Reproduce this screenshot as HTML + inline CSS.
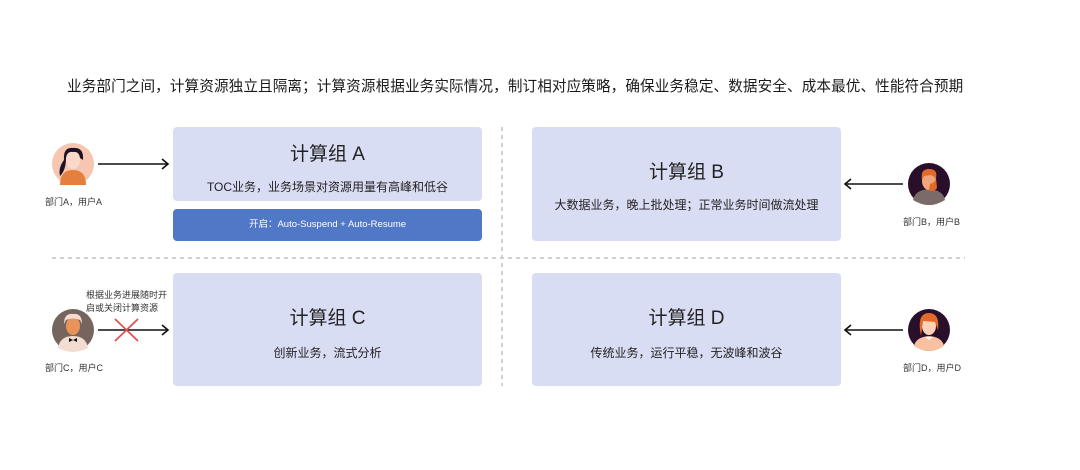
<!DOCTYPE html>
<html><head><meta charset="utf-8"><style>
body{margin:0;width:1080px;height:470px;background:#fff;position:relative;overflow:hidden;font-family:"Liberation Sans","Noto Sans CJK SC",sans-serif;color:#222}
.a{position:absolute}
.box{position:absolute;background:#d9ddf4;border-radius:4px;text-align:center}
.t{font-size:19px;color:#222}
.s{font-size:12px;color:#222}
.lbl{position:absolute;font-size:9px;color:#333;white-space:nowrap}
</style></head><body>
<div class="a" style="left:67px;top:75px;font-size:14.6px;letter-spacing:0.1px;white-space:nowrap;color:#1a1a1a">业务部门之间，计算资源独立且隔离；计算资源根据业务实际情况，制订相对应策略，确保业务稳定、数据安全、成本最优、性能符合预期</div>

<div class="box" style="left:173px;top:127px;width:309px;height:74px"><div class="t" style="margin-top:12px">计算组 A</div><div class="s" style="margin-top:12px">TOC业务，业务场景对资源用量有高峰和低谷</div></div>
<div class="a" style="left:173px;top:209px;width:309px;height:32px;background:#5078c7;border-radius:4px;color:#fff;font-size:9.5px;text-align:center;line-height:32px">开启：Auto-Suspend + Auto-Resume</div>
<div class="box" style="left:532px;top:127px;width:309px;height:114px"><div class="t" style="margin-top:30px">计算组 B</div><div class="s" style="margin-top:12px">大数据业务，晚上批处理；正常业务时间做流处理</div></div>
<div class="box" style="left:173px;top:273px;width:309px;height:113px"><div class="t" style="margin-top:30px">计算组 C</div><div class="s" style="margin-top:14px">创新业务，流式分析</div></div>
<div class="box" style="left:532px;top:273px;width:309px;height:113px"><div class="t" style="margin-top:30px">计算组 D</div><div class="s" style="margin-top:14px">传统业务，运行平稳，无波峰和波谷</div></div>

<svg class="a" style="left:0;top:0" width="1080" height="470">
<line x1="52" y1="258" x2="965" y2="258" stroke="#c4c4c4" stroke-width="1.5" stroke-dasharray="4,4"/>
<line x1="502" y1="127" x2="502" y2="386" stroke="#c4c4c4" stroke-width="1.5" stroke-dasharray="4,4"/>
<g stroke="#111" stroke-width="1.6" fill="none">
<line x1="98" y1="164" x2="168" y2="164"/><path d="M162 159 L168 164 L162 169"/>
<line x1="98" y1="330" x2="168" y2="330"/><path d="M162 325 L168 330 L162 335"/>
<line x1="845" y1="184" x2="903" y2="184"/><path d="M851 179 L845 184 L851 189"/>
<line x1="845" y1="330" x2="903" y2="330"/><path d="M851 325 L845 330 L851 335"/>
</g>
<g stroke="#d9534f" stroke-width="1.8"><line x1="115" y1="319" x2="138" y2="341"/><line x1="138" y1="319" x2="115" y2="341"/></g>
<circle cx="73" cy="164" r="21" fill="#f7c6b0"/>
<path d="M60 185 Q60 170 73 170 Q86 170 86 185 Z" fill="#e57f3e"/>
<ellipse cx="73" cy="160" rx="7" ry="9" fill="#f9d9c8"/>
<path d="M64 160 Q63 147 73 148 Q84 147 83 160 L80 158 Q79 151 73 152 Q67 151 66 158 Q66 170 60 176 Q58 168 64 160Z" fill="#1e1026"/>
<circle cx="73" cy="330" r="21" fill="#76645f"/>
<path d="M58 348 Q60 336 73 336 Q86 336 88 348 Q80 352 73 352 Q66 352 58 348Z" fill="#f3dcd0"/>
<ellipse cx="73" cy="326" rx="7" ry="9" fill="#e8935a"/>
<path d="M64 324 Q64 313 73 314 Q82 313 82 324 L80 320 Q73 317 66 320Z" fill="#f3dcd0"/>
<path d="M69 338 L77 342 L77 338 L69 342Z" fill="#111"/>
<circle cx="929" cy="184" r="21" fill="#2a0f2a"/>
<path d="M913 200 Q915 190 929 189 Q943 190 945 200 Q937 205 929 205 Q921 205 913 200Z" fill="#7a6a6a"/>
<ellipse cx="929" cy="181" rx="7" ry="9" fill="#f1a57d"/>
<path d="M922 180 Q920 169 929 169 Q938 169 936 178 L931 175 L924 176Z" fill="#e36b2a"/>
<path d="M930 184 Q936 182 936 178 L937 188 Q933 193 929 190Z" fill="#e36b2a"/>
<circle cx="929" cy="330" r="21" fill="#2a0f2a"/>
<path d="M914 346 Q916 337 929 336 Q942 337 944 346 Q937 351 929 351 Q921 351 914 346Z" fill="#f7c1a2"/>
<ellipse cx="929" cy="326" rx="7" ry="9" fill="#fbd1b8"/>
<path d="M920 330 Q918 313 929 313 Q940 313 938 330 L935 322 L923 321 L921 336 Z" fill="#e36b2a"/>
<path d="M925 337 L933 337 L929 340Z" fill="#fff"/>
</svg>
<div class="lbl" style="left:45px;top:195px">部门A，用户A</div>
<div class="lbl" style="left:45px;top:361px">部门C，用户C</div>
<div class="lbl" style="left:903px;top:215px">部门B，用户B</div>
<div class="lbl" style="left:903px;top:361px">部门D，用户D</div>
<div class="lbl" style="left:86px;top:289px;line-height:13px">根据业务进展随时开<br>启或关闭计算资源</div>
</body></html>
